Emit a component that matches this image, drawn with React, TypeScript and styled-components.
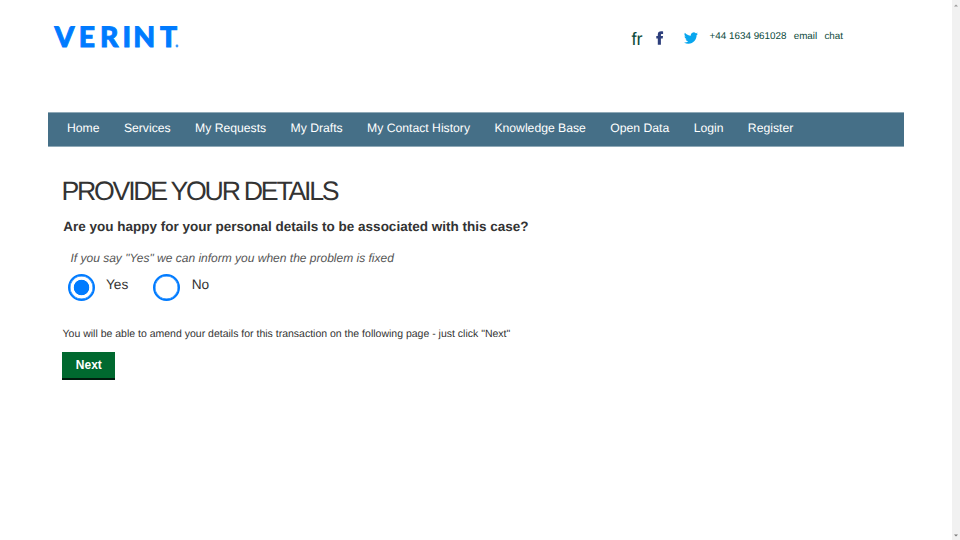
import React, { useState } from "react";
import styled, { createGlobalStyle } from "styled-components";

const GlobalStyle = createGlobalStyle`
  * { box-sizing: border-box; }
  body {
    margin: 0;
    background: #fff;
    color: #333;
    font-family: "Liberation Sans", Arial, sans-serif;
    overflow: hidden;
    text-rendering: geometricPrecision;
  }
`;

const Page = styled.div`
  display: flex;
  height: 540px;
`;

const Content = styled.div`
  flex: 1;
  padding-left: 47.5px;
`;

const Header = styled.header`
  display: flex;
  justify-content: space-between;
  height: 112px;
  padding: 20px 108.5px 0 2.5px;
`;

const Logo = styled.svg`
  display: block;
  width: 134px;
  height: 34px;
`;

const Contact = styled.div`
  display: flex;
  align-items: flex-start;
  color: #0b4a3c;
`;

const Language = styled.a`
  width: 25px;
  margin-top: 9px;
  font-size: 18px;
  line-height: 20px;
`;

const SocialIcon = styled.svg<{ $gap: number; $top: number }>`
  display: block;
  flex: none;
  margin: ${(p) => p.$top}px ${(p) => p.$gap}px 0 0;
`;

const ContactLink = styled.a`
  margin: 10px 0 0 7.2px;
  font-size: 9.85px;
  line-height: 14px;
  white-space: nowrap;
`;

const Nav = styled.nav`
  display: flex;
  gap: 24.4px;
  width: 856.5px;
  height: 35px;
  padding: 0 19.5px;
  background: #456f87;
  border-top: 1px solid #8fa9b7;
  border-bottom: 1px solid #8fa9b7;
`;

const NavLink = styled.a`
  color: #fff;
  font-size: 12.2px;
  line-height: 31px;
  white-space: nowrap;
`;

const Main = styled.main`
  padding: 28px 0 0 15px;
`;

const Title = styled.h1`
  margin: 0 0 0 -1px;
  font-size: 26.7px;
  font-weight: 400;
  line-height: 32px;
  letter-spacing: -2.25px;
`;

const Question = styled.h2`
  margin: 11px 0 0 0.8px;
  font-size: 13.5px;
  line-height: 18px;
`;

const Hint = styled.p`
  margin: 14px 0 0 8px;
  color: #555;
  font-size: 12px;
  font-style: italic;
  line-height: 16px;
`;

const Options = styled.div`
  display: flex;
  gap: 24.8px;
  margin: 8px 0 0 5px;
`;

const Option = styled.label`
  display: flex;
  gap: 11.5px;
  font-size: 13.7px;
  line-height: 21px;
`;

const Radio = styled.input`
  appearance: none;
  width: 27px;
  height: 27px;
  margin: 0;
  border: 2px solid #007bff;
  border-radius: 50%;
  background: #fff;
  box-shadow: inset 0 0 0 0.5px #007bff;
  &:checked {
    background: radial-gradient(circle, #007bff 7.4px, #fff 8.1px);
  }
`;

const Note = styled.p`
  margin: 26px 0 0;
  font-size: 10.5px;
  line-height: 15px;
`;

const NextButton = styled.button`
  display: block;
  width: 53px;
  height: 28px;
  margin: 10px 0 0 -0.2px;
  padding: 0;
  border: 0;
  border-bottom: 2px solid #001c0e;
  background: #00692f;
  color: #fff;
  font: bold 12px/27px "Liberation Sans", Arial, sans-serif;
`;

const ScrollTrack = styled.div`
  display: flex;
  flex-direction: column;
  justify-content: space-between;
  align-items: center;
  width: 8.5px;
  padding: 4px 0 3px;
  background: #f1f1f1;
`;

const navItems = [
  "Home", "Services", "My Requests", "My Drafts", "My Contact History",
  "Knowledge Base", "Open Data", "Login", "Register",
];

export default function App() {
  const [answer, setAnswer] = useState("Yes");
  return (
    <>
      <GlobalStyle />
      <Page>
        <Content>
          <Header>
            <Logo viewBox="50 20 134 34" role="img" aria-label="Verint">
              <text
                x="54.6 78.7 100.1 122.6 133.2 160"
                y="47.2"
                fill="#007bff"
                stroke="#007bff"
                strokeWidth="0.9"
                fontFamily="Lato, sans-serif"
                fontWeight="900"
                fontSize="28.3"
              >
                VERINT
              </text>
              <circle cx="177" cy="46" r="1.4" fill="#3c9aff" />
            </Logo>
            <Contact>
              <Language>fr</Language>
              <SocialIcon $gap={20} $top={11} width="8" height="14" viewBox="0 0 8 14">
                <path d="M1.8 13.7V7.6H.3V4.9h1.5V3.6C1.8 1.4 3.1.3 5.1.3c.9 0 1.6.1 2 .2v2.5H6c-.9 0-1.1.4-1.1 1v.9H7l-.3 2.7H4.9v6.1z" fill="#2d3f7c" />
              </SocialIcon>
              <SocialIcon $gap={4} $top={11} width="14" height="14" viewBox="0 0 24 24">
                <path fill="#08a6ee" d="M23.95 4.57a10 10 0 0 1-2.82.77 4.96 4.96 0 0 0 2.16-2.72c-.95.55-2 .95-3.13 1.18a4.92 4.92 0 0 0-8.38 4.48C7.69 8.09 4.07 6.13 1.64 3.16a4.93 4.93 0 0 0 1.52 6.57 4.9 4.9 0 0 1-2.23-.61v.06c0 2.38 1.7 4.37 3.95 4.82a5 5 0 0 1-2.21.09 4.94 4.94 0 0 0 4.6 3.42A9.87 9.87 0 0 1 0 19.54a13.99 13.99 0 0 0 7.55 2.21c9.05 0 14-7.5 14-13.98 0-.21 0-.42-.02-.63a9.9 9.9 0 0 0 2.46-2.55z" />
              </SocialIcon>
              <ContactLink>+44 1634 961028</ContactLink>
              <ContactLink>email</ContactLink>
              <ContactLink>chat</ContactLink>
            </Contact>
          </Header>
          <Nav>
            {navItems.map((item) => (
              <NavLink key={item}>{item}</NavLink>
            ))}
          </Nav>
          <Main>
            <Title>PROVIDE YOUR DETAILS</Title>
            <Question>Are you happy for your personal details to be associated with this case?</Question>
            <Hint>If you say "Yes" we can inform you when the problem is fixed</Hint>
            <Options>
              {["Yes", "No"].map((value) => (
                <Option key={value}>
                  <Radio
                    type="radio"
                    name="associate"
                    checked={answer === value}
                    onChange={() => setAnswer(value)}
                  />
                  {value}
                </Option>
              ))}
            </Options>
            <Note>You will be able to amend your details for this transaction on the following page - just click "Next"</Note>
            <NextButton type="button">Next</NextButton>
          </Main>
        </Content>
        <ScrollTrack>
          <svg width="4" height="3" viewBox="0 0 4 3"><path d="M0 2.5L2 .5l2 2z" fill="#999" /></svg>
          <svg width="4" height="3" viewBox="0 0 4 3"><path d="M0 .5l2 2 2-2z" fill="#777" /></svg>
        </ScrollTrack>
      </Page>
    </>
  );
}
